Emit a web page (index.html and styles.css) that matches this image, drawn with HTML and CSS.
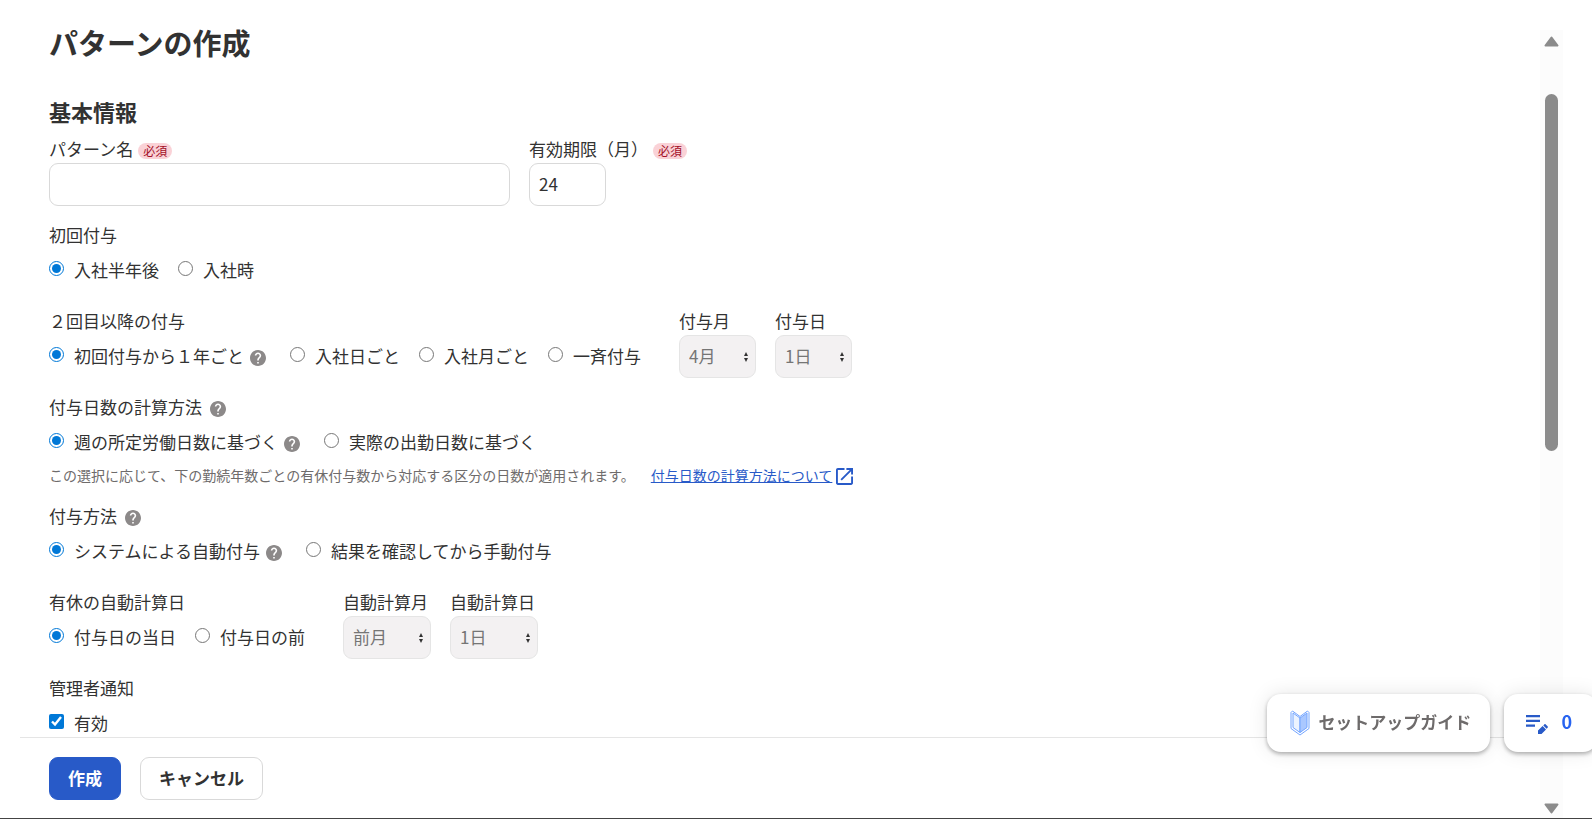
FILE: index.html
```html
<!DOCTYPE html>
<html lang="ja">
<head>
  <meta charset="UTF-8">
  <title>パターンの作成</title>
  <link rel="stylesheet" href="styles.css">
</head>
<body>
  <svg class="symbols" aria-hidden="true">
    <symbol id="icon-help" viewBox="2 2 20 20">
      <path d="M12 2C6.48 2 2 6.48 2 12s4.48 10 10 10 10-4.48 10-10S17.52 2 12 2zm1 17h-2v-2h2v2zm2.07-7.75l-.9.92C13.45 12.9 13 13.5 13 15h-2v-.5c0-1.1.45-2.1 1.17-2.83l1.24-1.26c.37-.36.59-.86.59-1.41 0-1.1-.9-2-2-2s-2 .9-2 2H8c0-2.21 1.79-4 4-4s4 1.79 4 4c0 .88-.36 1.68-.93 2.25z"/>
    </symbol>
  </svg>

  <div class="dialog">
    <h1 class="dialog-title">パターンの作成</h1>

    <form class="dialog-form" id="patternForm">
      <h2 class="section-title">基本情報</h2>

      <div class="row">
        <div class="field">
          <label class="label" for="patternName">パターン名<span class="required">必須</span></label>
          <input type="text" id="patternName" class="text-box name-box">
        </div>
        <div class="field">
          <label class="label" for="expireMonths">有効期限（月）<span class="required">必須</span></label>
          <input type="text" id="expireMonths" class="text-box short-box" value="24">
        </div>
      </div>

      <div class="row">
        <fieldset class="field">
          <legend class="label">初回付与</legend>
          <div class="choices">
            <label class="choice"><input type="radio" name="first" checked>入社半年後</label>
            <label class="choice"><input type="radio" name="first">入社時</label>
          </div>
        </fieldset>
      </div>

      <div class="row">
        <fieldset class="field choices-field">
          <legend class="label">２回目以降の付与</legend>
          <div class="choices">
            <label class="choice with-help"><input type="radio" name="second" checked>初回付与から１年ごと<svg class="help"><use href="#icon-help"/></svg></label>
            <label class="choice"><input type="radio" name="second">入社日ごと</label>
            <label class="choice"><input type="radio" name="second">入社月ごと</label>
            <label class="choice"><input type="radio" name="second">一斉付与</label>
          </div>
        </fieldset>
        <div class="field">
          <label class="label" for="grantMonth">付与月</label>
          <select id="grantMonth" class="select-box" disabled><option>4月</option></select>
        </div>
        <div class="field">
          <label class="label" for="grantDay">付与日</label>
          <select id="grantDay" class="select-box" disabled><option>1日</option></select>
        </div>
      </div>

      <div class="row">
        <fieldset class="field">
          <legend class="label">付与日数の計算方法<svg class="help"><use href="#icon-help"/></svg></legend>
          <div class="choices">
            <label class="choice with-help"><input type="radio" name="days" checked>週の所定労働日数に基づく<svg class="help"><use href="#icon-help"/></svg></label>
            <label class="choice"><input type="radio" name="days">実際の出勤日数に基づく</label>
          </div>
          <p class="hint">この選択に応じて、下の勤続年数ごとの有休付与数から対応する区分の日数が適用されます。
            <a href="#" class="hint-link"><span>付与日数の計算方法について</span><svg class="external" viewBox="3 3 18 18"><path d="M19 19H5V5h7V3H5c-1.11 0-2 .9-2 2v14c0 1.1.89 2 2 2h14c1.1 0 2-.9 2-2v-7h-2v7zM14 3v2h3.59l-9.83 9.83 1.41 1.41L19 6.41V10h2V3h-7z"/></svg></a>
          </p>
        </fieldset>
      </div>

      <div class="row">
        <fieldset class="field">
          <legend class="label">付与方法<svg class="help"><use href="#icon-help"/></svg></legend>
          <div class="choices">
            <label class="choice with-help"><input type="radio" name="method" checked>システムによる自動付与<svg class="help"><use href="#icon-help"/></svg></label>
            <label class="choice"><input type="radio" name="method">結果を確認してから手動付与</label>
          </div>
        </fieldset>
      </div>

      <div class="row">
        <fieldset class="field choices-field">
          <legend class="label">有休の自動計算日</legend>
          <div class="choices">
            <label class="choice"><input type="radio" name="calc" checked>付与日の当日</label>
            <label class="choice"><input type="radio" name="calc">付与日の前</label>
          </div>
        </fieldset>
        <div class="field">
          <label class="label" for="calcMonth">自動計算月</label>
          <select id="calcMonth" class="select-box wide" disabled><option>前月</option></select>
        </div>
        <div class="field">
          <label class="label" for="calcDay">自動計算日</label>
          <select id="calcDay" class="select-box wide" disabled><option>1日</option></select>
        </div>
      </div>

      <div class="row">
        <fieldset class="field">
          <legend class="label">管理者通知</legend>
          <div class="choices">
            <label class="choice"><input type="checkbox" checked>有効</label>
          </div>
        </fieldset>
      </div>
    </form>

    <div class="dialog-footer">
      <button type="submit" form="patternForm" class="button primary">作成</button>
      <button type="button" class="button">キャンセル</button>
    </div>
  </div>

  <div class="scrollbar" aria-hidden="true">
    <svg class="arrow" viewBox="0 0 15 11"><path d="M7.5 1.5 13.5 9.5H1.5z"/></svg>
    <div class="track">
      <div class="before"></div>
      <div class="thumb"></div>
      <div class="after"></div>
    </div>
    <svg class="arrow" viewBox="0 0 15 11"><path d="M7.5 9.5 13.5 1.5H1.5z"/></svg>
  </div>

  <div class="floating">
    <button type="button" class="float-button guide">
      <svg class="beginner" viewBox="0 0 20 26">
        <path class="edge" d="M1 2.500 2.500 1 10 6.500 17.500 1 19 2.500v16L10 25l-9-6.500z"/>
        <path class="left" d="M3 3l7 5v14.500l-7-5z"/>
        <path class="right" d="M17 3l-7 5v14.500l7-5z"/>
      </svg>
      セットアップガイド
    </button>
    <button type="button" class="float-button memo">
      <svg class="edit" viewBox="0 0 22 20"><path d="M0 1h14v2.300H0zM0 5.700h14V8H0zM0 10.500h9v2.300H0zM12 16.500V20h3.500l4.500-4.600-3.400-3.400zM21.600 13.700c.4-.4.4-1 0-1.400l-1.900-1.900c-.4-.4-1-.4-1.400 0l-1 1 3.300 3.300z"/></svg>
      0
    </button>
  </div>
</body>
</html>
```
FILE: styles.css
```css
* {
  box-sizing: border-box;
}

body {
  font-family: "Noto Sans CJK JP", sans-serif;
  font-size: 17px;
  line-height: 27px;
  margin: 0;
  padding: 0 29px 0 20px;
  height: 100vh;
  display: flex;
  overflow: hidden;
  background: #fff;
  color: #323232;
  border-bottom: 1px solid #444;
}

.symbols {
  position: absolute;
  width: 0;
  height: 0;
}

/* Dialog */
.dialog {
  flex: 1;
  min-width: 0;
  display: flex;
  flex-direction: column;
}

.dialog-title {
  margin: 0;
  padding: 20px 29px 24px;
  font-size: 29px;
  line-height: 44px;
}

.dialog-form {
  flex: 1;
  min-height: 0;
  overflow: hidden;
  padding: 7px 29px 0;
}

.section-title {
  margin: 0 0 9px;
  font-size: 22px;
  line-height: 32px;
}

.row {
  display: flex;
  gap: 19px;
  margin-bottom: 16px;
}

.field {
  margin: 0;
  padding: 0;
  border: 0;
  min-width: 0;
}

.choices-field {
  margin-right: 19px;
}

.label {
  display: flex;
  align-items: center;
  height: 27px;
  padding: 0 0 2px;
  white-space: nowrap;
}

.required {
  margin: 4px 0 0 5px;
  padding: 0 5px;
  border-radius: 8px;
  background: #fad2d7;
  color: #a30f28;
  font-size: 12px;
  line-height: 16px;
}

.text-box,
.select-box {
  display: block;
  height: 43px;
  padding: 0 9px 3px;
  border: 1px solid #d9d9d9;
  border-radius: 9px;
  background: #fff;
  color: #323232;
  font: inherit;
}

.name-box {
  width: 461px;
}

.short-box,
.select-box {
  width: 77px;
}

.select-box {
  appearance: none;
  border-color: #e5e5e5;
  background: #f3f1f2 url("data:image/svg+xml,%3Csvg xmlns='http://www.w3.org/2000/svg' viewBox='0 0 6 12'%3E%3Cpath fill='%23323232' d='M3 1l2 4H1zM3 11l2-4H1z'/%3E%3C/svg%3E") no-repeat right 6px center / 6px 12px;
  color: #757575;
  opacity: 1;
}

.select-box.wide {
  width: 88px;
}

.choices {
  display: flex;
  align-items: center;
  gap: 19px;
  height: 43px;
  padding-bottom: 3px;
}

.choice {
  display: flex;
  align-items: center;
  white-space: nowrap;
}

.choice input {
  width: 15px;
  height: 15px;
  margin: 0 10px 1px 0;
  accent-color: #0078d7;
}

.with-help {
  margin-right: 5px;
}

.help {
  width: 16px;
  height: 16px;
  margin: 5px 0 0 6px;
  fill: #8c8989;
}

.label .help {
  margin-left: 8px;
}

.hint {
  display: flex;
  align-items: center;
  gap: 16px;
  margin: 0;
  color: #6e6b6b;
  font-size: 14px;
  line-height: 23px;
}

.hint-link {
  display: flex;
  align-items: center;
  gap: 4px;
  color: #285ac8;
}

.external {
  width: 17px;
  height: 17px;
  margin-top: 2px;
  fill: #285ac8;
}

/* Footer */
.dialog-footer {
  display: flex;
  gap: 19px;
  padding: 19px 29px 18px;
  border-top: 1px solid #e5e5e5;
}

.button {
  height: 43px;
  padding: 0 18px 3px;
  border: 1px solid #d9d9d9;
  border-radius: 9px;
  background: #fff;
  color: #323232;
  font: inherit;
  font-weight: bold;
}

.button.primary {
  border-color: #285ac8;
  background: #285ac8;
  color: #fff;
}

/* Scrollbar */
.scrollbar {
  display: flex;
  flex-direction: column;
  align-items: center;
  width: 23px;
  margin-top: 30px;
  padding: 6px 0 4px;
  background: #fcfcfc;
}

.arrow {
  width: 15px;
  height: 11px;
  fill: #8b8b8b;
  stroke: #8b8b8b;
  stroke-width: 2px;
  stroke-linejoin: round;
}

.track {
  flex: 1;
  display: flex;
  flex-direction: column;
  width: 13px;
}

.before {
  flex: 47;
}

.thumb {
  flex: 357;
  border-radius: 7px;
  background: #8b8b8b;
}

.after {
  flex: 352;
}

/* Floating buttons */
.floating {
  position: fixed;
  right: -5px;
  bottom: 67px;
  display: flex;
  gap: 14px;
}

.float-button {
  display: flex;
  align-items: center;
  height: 58px;
  border: 0;
  border-radius: 14px;
  background: #fff;
  box-shadow: 0 2px 4px rgba(0, 0, 0, 0.3), 0 0 20px rgba(0, 0, 0, 0.1);
  font: inherit;
  font-weight: bold;
}

.guide {
  gap: 8px;
  padding: 0 19px 3px 23px;
  color: #6e6b6b;
}

.memo {
  gap: 13px;
  padding: 0 25px 3px 22px;
  color: #2864f0;
  font-size: 18px;
}

.beginner {
  width: 20px;
  height: 26px;
  margin-top: 3px;
}

.beginner path {
  stroke: #73a5ff;
}

.beginner .edge {
  fill: #fff;
}

.beginner .left {
  fill: #ebf3ff;
}

.beginner .right {
  fill: #aac8ff;
}

.edit {
  width: 22px;
  height: 20px;
  margin-top: 4px;
  fill: #285ac8;
}
```
